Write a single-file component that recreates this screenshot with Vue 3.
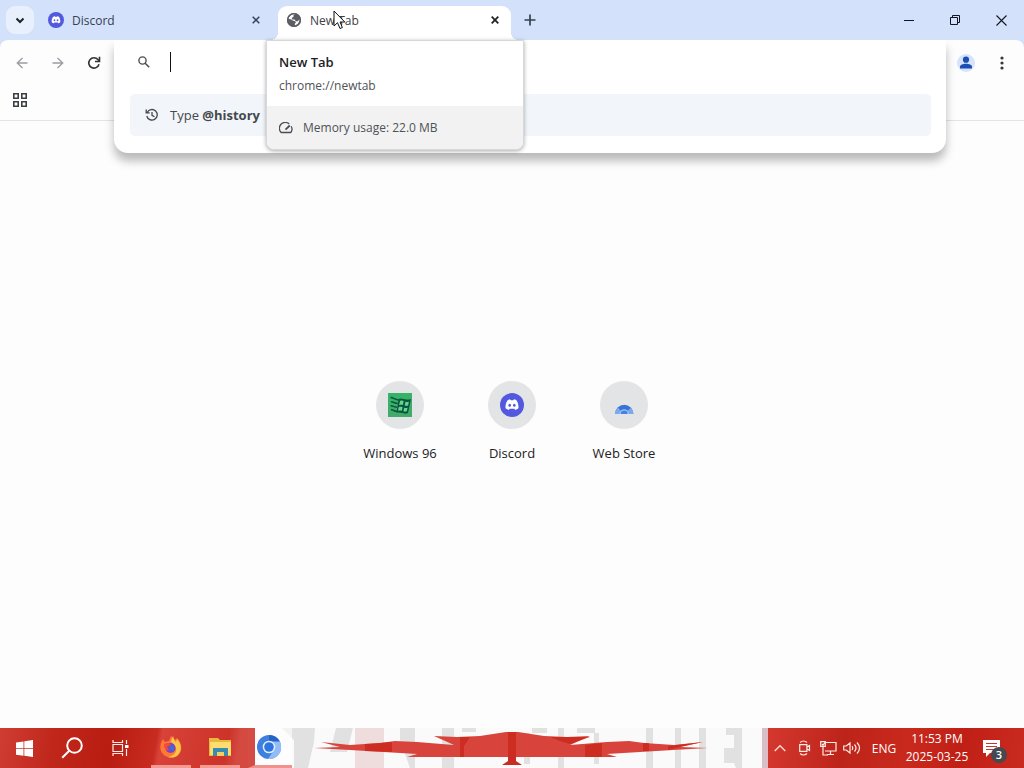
<script setup>
const shortcuts = [
  { name: 'Windows 96', icon: 'win96' },
  { name: 'Discord', icon: 'discord' },
  { name: 'Web Store', icon: 'store' },
]
</script>

<template>
  <div class="desktop">
    <svg class="defs" width="0" height="0" aria-hidden="true">
      <symbol id="discord" viewBox="0 0 24 24">
        <circle cx="12" cy="12" r="12" fill="#5259df" />
        <path fill="#fff" d="M8.500 6.700 10 6.200l.7 1.100h2.600l.7-1.100 1.700.5c1.800.9 3.100 5.300 2.800 8.600-1 .9-2.100 1.400-3.300 1.700l-.8-1.300H9.600L8.800 17c-1.200-.3-2.300-.8-3.300-1.700-.3-3.300 1-7.700 3-8.600z" />
        <ellipse cx="9.700" cy="12.200" rx="1.300" ry="1.500" fill="#5259df" />
        <ellipse cx="14.300" cy="12.200" rx="1.300" ry="1.500" fill="#5259df" />
      </symbol>
    </svg>

    <header class="tabstrip">
      <button class="tab-search" aria-label="Search tabs">
        <svg width="10" height="7" viewBox="0 0 10 7"><path d="m1.500 1.500 3.500 3.500 3.500-3.500" fill="none" stroke="#1f2329" stroke-width="2" /></svg>
      </button>
      <div class="tab">
        <svg width="16" height="16"><use href="#discord" /></svg>
        <span class="tab-title">Discord</span>
        <button class="close" aria-label="Close Discord">
          <svg width="8" height="8" viewBox="0 0 8 8"><path d="m.7.7 6.600 6.600M7.300.7.7 7.300" stroke="#354052" stroke-width="1.500" /></svg>
        </button>
      </div>
      <div class="tab active">
        <svg width="16" height="16" viewBox="0 0 16 16">
          <circle cx="8" cy="8" r="7" fill="#5b5e63" />
          <path fill="#fff" d="M9 2.200 7.300 3.600 7.500 5 5.800 5.700l.4 1.800h2.400l1 1.600 1.800.3 1.800-1.700.4-.1c-.1 3-2 5.100-4.600 5.900l-.3-1.700 1.300-1.200-.8-1.400-2.500-.6L5 7.300 2.500 7C2.900 4.100 5.700 1.700 9 2.200z" />
          <circle cx="8" cy="8" r="6.400" fill="none" stroke="#5b5e63" stroke-width="1.300" />
        </svg>
        <span class="tab-title">New Tab</span>
        <button class="close" aria-label="Close New Tab">
          <svg width="8" height="8" viewBox="0 0 8 8"><path d="m.7.7 6.600 6.600M7.300.7.7 7.300" stroke="#202327" stroke-width="1.800" /></svg>
        </button>
      </div>
      <button class="new-tab" aria-label="New tab">
        <svg width="12" height="12" viewBox="0 0 12 12"><path d="M6 .5v11M.5 6h11" stroke="#354052" stroke-width="1.700" /></svg>
      </button>
      <div class="window-buttons">
        <button aria-label="Minimize"><svg width="10" height="10" viewBox="0 0 10 10"><path d="M0 5.500h10" stroke="#111722" /></svg></button>
        <button aria-label="Restore">
          <svg width="10" height="10" viewBox="0 0 10 10"><path d="M.5 2.500h7v7h-7zM2.500 2.500v-2h7v7h-2" fill="none" stroke="#111722" /></svg>
        </button>
        <button aria-label="Close"><svg width="11" height="11" viewBox="0 0 11 11"><path d="m.5.5 10 10M10.500.5l-10 10" stroke="#111722" stroke-width="1.100" /></svg></button>
      </div>
    </header>

    <div class="toolbar-back">
      <nav class="toolbar">
        <div class="nav-buttons">
          <button aria-label="Back"><svg width="12" height="12" viewBox="0 0 12 12"><path d="M11.500 6h-10M6.500 1 1.300 6l5.200 5" fill="none" stroke="#9b9ea3" stroke-width="1.400" /></svg></button>
          <button aria-label="Forward"><svg width="12" height="12" viewBox="0 0 12 12"><path d="M.5 6h10M5.500 1l5.200 5-5.200 5" fill="none" stroke="#9b9ea3" stroke-width="1.400" /></svg></button>
          <button aria-label="Reload">
            <svg width="14" height="14" viewBox="0 0 14 14"><path d="M12 8.200A5.200 5.200 0 1 1 11 3.600L12.300 5" fill="none" stroke="#303338" stroke-width="1.600" /><path d="M12.500.8V5.500H8" fill="none" stroke="#303338" stroke-width="1.600" /></svg>
          </button>
        </div>
        <div class="profile-buttons">
          <button aria-label="Profile">
            <svg width="18" height="18" viewBox="0 0 18 18"><circle cx="9" cy="9" r="9" fill="#d6e3fc" /><circle cx="9" cy="5.700" r="3.100" fill="#1d4fb3" /><path d="M3 14.500v-1.700c0-4 12-4 12 0v1.700z" fill="#1d4fb3" /></svg>
          </button>
          <button aria-label="Menu"><svg width="4" height="14" viewBox="0 0 4 14" fill="#34373c"><circle cx="2" cy="2" r="1.600" /><circle cx="2" cy="7" r="1.600" /><circle cx="2" cy="12" r="1.600" /></svg></button>
        </div>
      </nav>
    </div>

    <div class="bookmarks">
      <button aria-label="Tab groups">
        <svg width="16" height="16" viewBox="0 0 16 16" fill="none" stroke="#3c3f44" stroke-width="1.600"><path d="M1.800 1.800h4.400v4.400H1.800zM9.800 1.800h4.400v4.400H9.800zM1.800 9.800h4.400v4.400H1.800zM9.800 9.800h4.400v4.400H9.800z" /></svg>
      </button>
    </div>

    <section class="omnibox">
      <label class="search-row">
        <svg width="12" height="12" viewBox="0 0 12 12"><circle cx="4.500" cy="4.500" r="3.600" fill="none" stroke="#4b4e53" stroke-width="1.400" /><path d="m7.200 7.200 4 4" stroke="#4b4e53" stroke-width="1.600" /></svg>
        <i class="caret"></i>
        <input type="text" aria-label="Address and search bar" />
      </label>
      <button class="suggestion">
        <svg width="14" height="14" viewBox="0 0 14 14" fill="none" stroke="#44474c" stroke-width="1.300"><path d="M2.200 4.500A5.300 5.300 0 1 1 1.800 8M1.200 1.500v3.300h3.500M7 4v3.300l2.500 1.500" /></svg>
        <span>Type <b>@history</b></span>
      </button>
    </section>

    <aside class="hover-card">
      <div class="card-head">
        <h2>New Tab</h2>
        <p>chrome://newtab</p>
      </div>
      <div class="memory">
        <svg width="14" height="12" viewBox="0 0 14 12" fill="none" stroke="#4b4e53" stroke-width="1.300"><path d="M10.200 2A5.800 5.800 0 0 0 2.200 10.500h9.600A5.700 5.700 0 0 0 12.200 4.200" /><path d="m6.500 7.700 4.300-4.200" stroke-width="1.800" /></svg>
        <span>Memory usage: 22.0 MB</span>
      </div>
    </aside>

    <svg class="cursor" width="13" height="20" viewBox="0 0 13 20"><path d="M1 1v15l3.500-3.300L7 18.500l2.400-1L7 12h4.800z" fill="#fff" stroke="#111" /></svg>

    <main class="page">
      <a v-for="s in shortcuts" :key="s.name" href="#" class="shortcut">
        <span class="disc">
          <svg v-if="s.icon === 'discord'" width="24" height="24"><use href="#discord" /></svg>
          <svg v-else-if="s.icon === 'win96'" width="24" height="24" viewBox="0 0 24 24">
            <path d="M0 0h24v24H0z" fill="#35b467" />
            <path d="M0 16 24 3v21H0z" fill="#49a66b" opacity=".6" />
            <path d="M10.500 6c4-2 7 2 12.500 0l-3 14c-4 2-7-1.500-11.500 0z" fill="#0b5540" />
            <path d="M12 8c1.500-.7 2.700-.4 3.700 0l-.8 4c-1.300-.4-2.500-.4-3.800.2zM17.500 8.700c1.300.4 2.200.5 3.400.1l-.8 3.800c-1.200.4-2.200.3-3.400-.1zM10.700 14.200c1.500-.6 2.600-.4 3.900 0l-.8 3.500c-1.300-.3-2.500-.3-3.800 0zM16.200 14.800c1.300.4 2.200.4 3.400 0l-.8 3.500c-1.300.4-2.200.3-3.400-.1z" fill="#62d68c" />
            <path d="M2.500 4.500c2.500-.5 4.500 3 8 2M3 8.800c2.300-.5 3.800 2.200 6.700 1.400M2.500 12.800c2.300-.5 3.800 2 6.500 1.300M3 16.800c2.200-.5 3.500 2 6 1.500" fill="none" stroke="#0b5540" stroke-width="1.500" />
          </svg>
          <svg v-else width="24" height="24" viewBox="0 0 24 24">
            <path d="M3 21a9.200 9.200 0 0 1 18.400 0z" fill="#3973d2" />
            <path d="M3 21c0-3 1-5 3-6.500L9 18v3zM21.400 21c0-2.500-.8-4.500-2.600-6L15 18v3z" fill="#79a9ef" />
            <path d="M7.500 21a4.700 4.700 0 0 1 9.400 0z" fill="#a3c4f7" /><path d="M8.800 21a3.400 3.400 0 0 1 6.800 0z" fill="#4384e2" />
          </svg>
        </span>
        <span>{{ s.name }}</span>
      </a>
    </main>

    <footer class="taskbar">
      <div class="launchers">
        <button aria-label="Start"><svg width="17" height="17" viewBox="0 0 17 17" fill="#fff"><path d="m0 2.400 7.500-1v6.800H0zM8.300 1.300 17 0v8.200H8.300zM0 9h7.500v6.700L0 14.700zM8.300 9H17v8l-8.700-1.200z" /></svg></button>
        <button aria-label="Search"><svg width="22" height="22" viewBox="0 0 22 22" fill="none" stroke="#fff" stroke-width="2"><circle cx="13.500" cy="8.500" r="7.300" /><path d="m8.200 13.800-7 7" /></svg></button>
        <button aria-label="Task view"><svg width="17" height="16" viewBox="0 0 17 16" fill="none" stroke="#ffece8" stroke-width="1.200"><path d="M1 0v2.500h9.500V0M1 16v-2.500h9.500V16M1 4.500h9.500v7H1zM14.500 0v4M14.500 9v7" /><path d="M13 5h3.500v3H13z" fill="#fff" stroke="none" /></svg></button>
        <button class="running" aria-label="Firefox">
          <svg width="24" height="24" viewBox="0 0 24 24">
            <path d="M2 8 4 4l2 3 4-1 2-5 4 4 2-2c5 5 6 13 1 17-5 4-12 3-15-1C1 16 1 12 2 8z" fill="#ff7932" />
            <path d="M14 1c1 4 2 5 3 6l1-3c5 5 5 12 1 16-3 3-7 3-10 2 6-1 9-5 8-9-1-3-4-4-5-7z" fill="#ffc548" />
            <circle cx="11.500" cy="13" r="5" fill="#7447c3" /><path d="M5 9c3-2 6-1 7 1l-4 2 2 3c-3 1-5-2-5-6z" fill="#f04b38" /><circle cx="13" cy="13" r="2.400" fill="#4965df" />
          </svg>
        </button>
        <button class="running" aria-label="File Explorer">
          <svg width="23" height="20" viewBox="0 0 23 20"><path d="M0 1h9l2 2h11v16H0z" fill="#e8b83e" /><path d="M1 5h21v13H1z" fill="#ffdc70" /><path d="M4 11h15v8h-4v-4H8v4H4z" fill="#398caf" /><path d="M8 15h7v4H8z" fill="#f5cd60" /></svg>
        </button>
      </div>
      <div class="wallpaper">
        <svg class="art" viewBox="0 0 520 40" preserveAspectRatio="xMidYMid slice" aria-hidden="true">
          <path d="M0 0h520v40H0z" fill="#fbfafa" />
          <g fill="#e2e1e1">
            <path d="M34 0h33l-1 14-6 26H46V12zM88 0h17l-6 24H82zM152 0h15v40h-5l-10-28zM194 0h12v40h-12zM214 0h14v4h-14z" />
            <path d="M284 0h15v5h-15zM276 5h6v31h-6zM310 0h6v40h-6zM329 0h18v5h-18zM346 5h5v31h-5zM398 0h7v40h-7zM427 0h6v40h-6zM451 0h7v40h-7zM478 0h16v40h-6l-2-5h-10V20h10V7h-8z" />
          </g>
          <path d="M107 0h29v40h-29z" fill="#efdcdd" /><path d="M514 0h6v40h-6z" fill="#d9bec7" />
          <path d="M66 20 92 19 73 14 102 17 132 15 147 13 169 14 206 17 186 8 209 9 232 8 258 4H270L296 8 319 9 342 8 322 17 359 14 381 13 396 15 426 17 455 14 432 19 460 20 425 22 359 26 369 29H159L169 26 102 22z" fill="#d8443b" />
          <path d="M117 16 132 15 144 14V24L117 23zM212 9H222L216 18V29H212zM260 4H268V29H260zM302 9H342L322 16 312 13zM337 17 354 15V29H337zM395 15H401V23H395zM420 18 455 14 432 19 420 22z" fill="#c9241a" opacity=".75" />
          <path d="M260 29H268V33L274 37H254L260 33z" fill="#c92b27" />
        </svg>
        <button class="chromium" aria-label="Chromium">
          <svg width="24" height="24" viewBox="0 0 24 24"><circle cx="12" cy="12" r="12" fill="#3e7fe0" /><path d="M12 0a12 12 0 0 1 11 7H12z" fill="#2464c9" /><path d="M12 6.500h11A12 12 0 0 1 11 24l6-9z" fill="#91bcf8" /><circle cx="12" cy="12" r="6.300" fill="#e4effe" /><circle cx="12" cy="12" r="4.800" fill="#2f75df" /></svg>
        </button>
      </div>
      <div class="tray">
        <button class="chevron" aria-label="Show hidden icons"><svg width="12" height="8" viewBox="0 0 12 8"><path d="m.7 7 5.300-5.300L11.300 7" fill="none" stroke="#ffd8d2" stroke-width="1.400" /></svg></button>
        <button aria-label="Meet now"><svg width="14" height="16" viewBox="0 0 14 16" fill="none" stroke="#ffece8" stroke-width="1.200"><path d="M3 2.500Q6.500-.5 10 2.500M3 13.500q3.500 3 7 0M2.700 4.700h7.200v6.600H2.700zM10 7l2.500-1.500v5L10 9" /></svg></button>
        <button aria-label="Network"><svg width="17" height="15" viewBox="0 0 17 15" fill="none" stroke="#ffece8" stroke-width="1.200"><path d="M5 1.500h11v8.500H5M10.500 10v3M7 13.500h7M.7.700h4.600v4.600H.7zM3 5.500V14h5M2 3l1 1 2-2.500" /></svg></button>
        <button aria-label="Volume"><svg width="18" height="14" viewBox="0 0 18 14" fill="none" stroke="#ffece8" stroke-width="1.200"><path d="M.7 5v4h2.500L7 12V2L3.200 5zM9 5q1.500 2 0 4M11.500 3.500q3 3.500 0 7M14 1.500q5 5.500 0 11" /></svg></button>
        <button class="language">ENG</button>
        <time class="clock" datetime="2025-03-25T23:53"><span>11:53 PM</span><span>2025-03-25</span></time>
        <button class="notice" aria-label="Notifications">
          <svg width="17" height="17" viewBox="0 0 17 17"><path d="M0 0h17v13H7l-4 4v-4H0z" fill="#fff" /><path d="M3 3.500h11M3 6.500h11M3 9.500h8" stroke="#c8352c" /></svg>
          <b>3</b>
        </button>
      </div>
    </footer>
  </div>
</template>

<style>
body { margin: 0; background: #fdfdfd; }
</style>

<style scoped>
.desktop { position: relative; display: flex; flex-direction: column; min-height: 100vh; overflow: hidden; background: #fdfdfd; font-family: "Open Sans", "Noto Sans", sans-serif; font-size: 13px; color: #202124; }
.defs { position: absolute; }
button { display: flex; align-items: center; justify-content: center; padding: 0; border: 0; background: none; font: inherit; color: inherit; }
svg { display: block; flex-shrink: 0; }
.tabstrip { display: flex; align-items: flex-end; height: 40px; padding-left: 6px; background: #d3e1fb; }
.tab-search { width: 28px; height: 28px; margin-bottom: 6px; border-radius: 9px; background: #e9f0fd; }
.tab { display: flex; align-items: center; gap: 8px; box-sizing: border-box; width: 233px; height: 34px; padding: 0 8px 6px 8px; font-size: 12px; color: #354052; }
.tab:not(.active) { width: 238px; padding-left: 14px; }
.tab-title { flex: 1; }
.tab.active { position: relative; margin-left: 6px; border-radius: 9px 9px 0 0; background: #fff; color: #3d4045; }
.tab.active::before, .tab.active::after { content: ""; position: absolute; bottom: 0; width: 8px; height: 8px; }
.tab.active::before { left: -8px; background: radial-gradient(circle at 0 0, transparent 8px, #fff 8px); }
.tab.active::after { right: -8px; background: radial-gradient(circle at 100% 0, transparent 8px, #fff 8px); }
.close { width: 16px; height: 16px; }
.new-tab { width: 28px; height: 28px; margin: 0 0 6px 5px; }
.window-buttons { display: flex; margin-left: auto; }
.window-buttons button { width: 46px; height: 40px; }
.toolbar-back { background: #d3e1fb; }
.toolbar { display: flex; align-items: center; justify-content: space-between; height: 46px; padding: 0 4px; border-radius: 8px 8px 0 0; background: #fdfdfd; }
.nav-buttons, .profile-buttons { display: flex; }
.toolbar button { width: 36px; height: 34px; }
.bookmarks { display: flex; align-items: center; height: 34px; padding: 0 6px; border-bottom: 1px solid #e4e4e4; }
.bookmarks button { width: 28px; height: 28px; margin-bottom: 6px; }
.omnibox { position: absolute; top: 40px; left: 114px; right: 78px; box-sizing: border-box; padding: 0 15px 17px 16px; background: #fff; border-radius: 0 0 14px 14px; box-shadow: 0 8px 10px #0004; clip-path: inset(0 -20px -30px -20px); }
.search-row { display: flex; align-items: center; height: 44px; padding: 0 8px; }
.search-row input { flex: 1; min-width: 0; border: 0; outline: 0; font: inherit; background: none; }
.caret { width: 1px; height: 20px; margin-left: 20px; background: #111; }
.suggestion { width: 100%; height: 42px; margin-top: 10px; padding: 0 15px; justify-content: flex-start; gap: 11px; border-radius: 5px; background: #f2f6fa; font-size: 13px; color: #45484c; }
.hover-card { position: absolute; top: 40px; left: 266px; box-sizing: border-box; width: 258px; overflow: hidden; border: 1px solid #d8d8da; border-radius: 0 0 8px 8px; background: #fff; box-shadow: 0 1px 4px #0005; }
.card-head { padding: 11px 12px; }
.card-head h2 { margin: 0; font-size: 13px; line-height: 20px; font-weight: 600; }
.card-head p { margin: 4px 0 0; font-size: 12px; line-height: 19px; color: #4f5256; }
.memory { display: flex; align-items: center; gap: 10px; height: 43px; padding: 0 12px; background: #f2f2f2; font-size: 12px; color: #4f5256; }
.cursor { position: absolute; top: 10px; left: 333px; }
.page { flex: 1; display: flex; justify-content: center; align-items: center; padding-bottom: 5px; }
.shortcut { display: flex; flex-direction: column; align-items: center; gap: 14px; width: 112px; color: #202124; line-height: 20px; text-decoration: none; }
.disc { display: flex; align-items: center; justify-content: center; width: 48px; height: 48px; border-radius: 50%; background: #e3e4e5; }
.taskbar { display: flex; height: 40px; color: #fff; }
.launchers { display: flex; box-sizing: border-box; width: 248px; background: linear-gradient(100deg, #cf3d33 0, #c0271b 22%, #b91c10 45%, #c82b20 62%, #d84239 64%, #cc3329 90%, #d44a41 95%); }
.launchers button { width: 48px; height: 40px; }
.launchers .running { width: 40px; box-sizing: border-box; margin-left: 7px; border-bottom: 3px solid #f39a93; }
.launchers .running + .running { margin-left: 9px; }
.wallpaper { position: relative; flex: 1; min-width: 0; overflow: hidden; background: #fbfafa; }
.art { width: 100%; height: 40px; }
.chromium { position: absolute; left: 0; top: 0; width: 44px; height: 40px; padding-right: 10px; box-sizing: border-box; border-left: 7px solid #d44c43; border-bottom: 3px solid #ef928d; background: #fff9; }
.tray { display: flex; align-items: center; width: 256px; background: linear-gradient(100deg, #d4382e, #bd2419 30%, #c9291d 55%, #c01f15 75%, #ca2b20); }
.tray button { width: 24px; height: 40px; }
.tray .language { width: 40px; font-size: 12px; }
.tray .clock { display: flex; flex-direction: column; align-items: center; width: 66px; font-size: 12px; line-height: 18px; white-space: nowrap; }
.tray .notice { position: relative; width: 42px; }
.notice b { position: absolute; left: 21px; top: 19px; width: 16px; height: 16px; border-radius: 50%; background: #444a50; font-size: 11px; line-height: 16px; font-weight: 600; }
</style>
